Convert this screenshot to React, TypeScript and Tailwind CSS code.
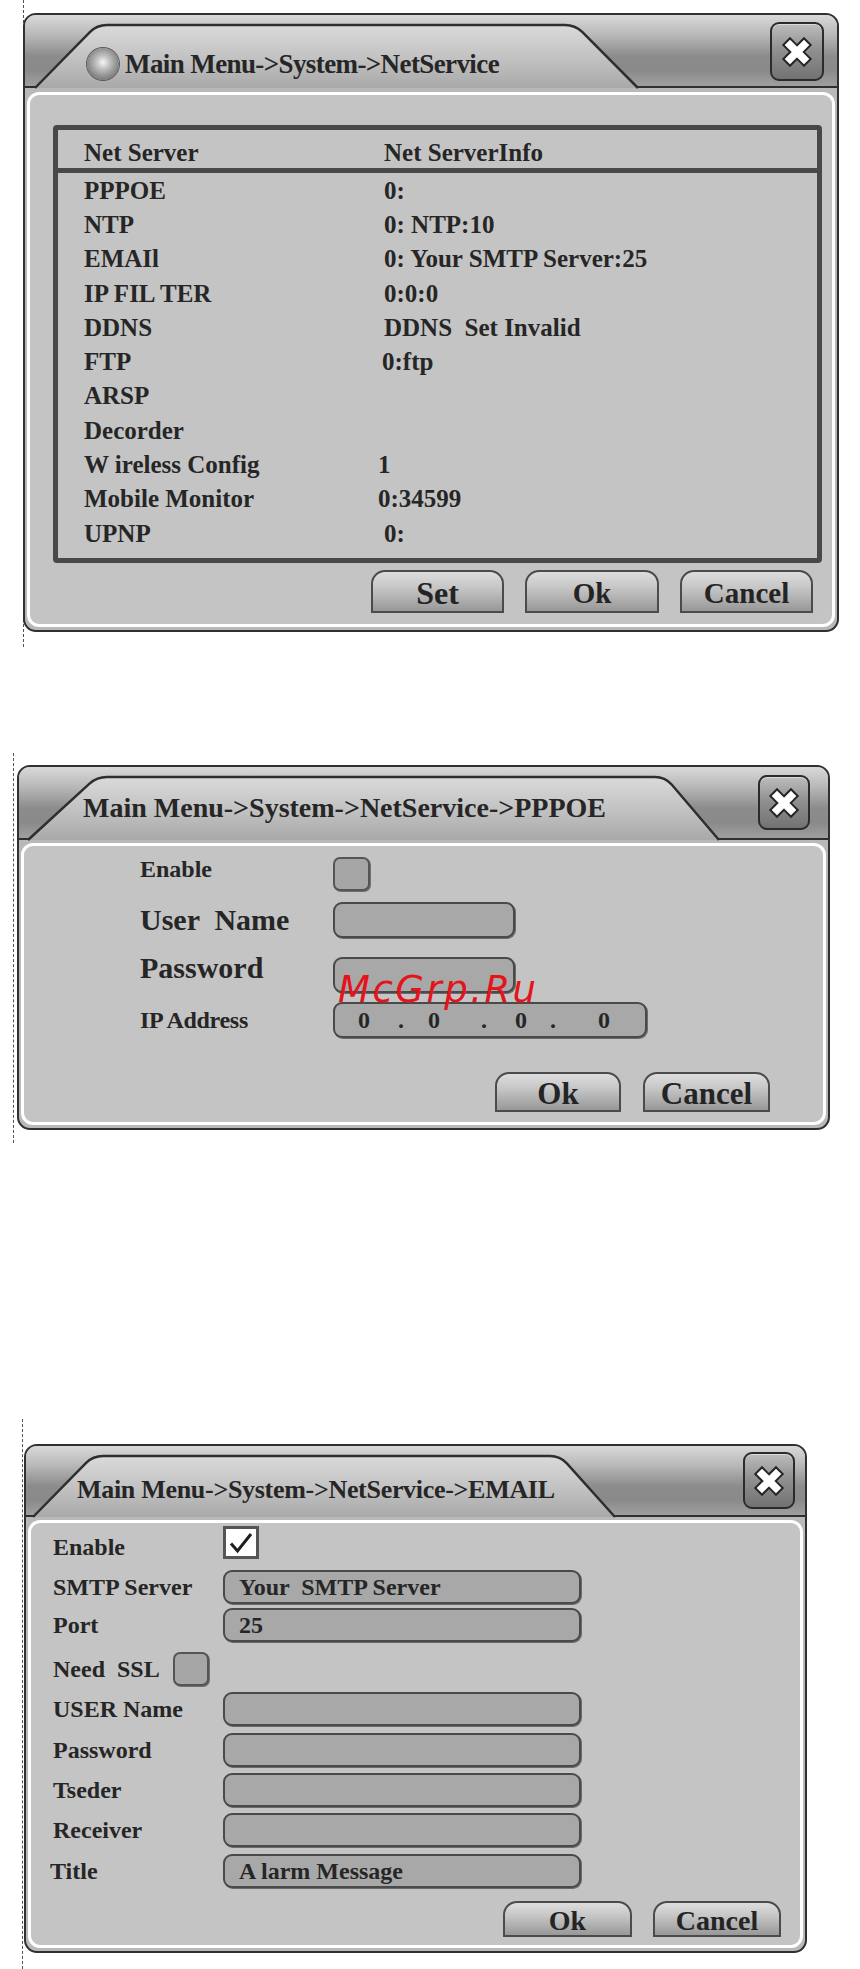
import React, { useId } from "react";

type TabGeom = { x1: number; x2: number; x3: number; x4: number; t: number; h: number };

function tabPath(g: TabGeom) {
  const r = 10;
  const d1x = g.x2 - g.x1;
  const d1y = g.t - g.h;
  const l1 = Math.hypot(d1x, d1y);
  const p1x = g.x2 - (d1x / l1) * r;
  const p1y = g.t - (d1y / l1) * r;
  const d2x = g.x4 - g.x3;
  const d2y = g.h - g.t;
  const l2 = Math.hypot(d2x, d2y);
  const p4x = g.x3 + (d2x / l2) * r;
  const p4y = g.t + (d2y / l2) * r;
  return `M${g.x1},${g.h + 2} L${p1x},${p1y} Q${g.x2},${g.t} ${g.x2 + r},${g.t} L${g.x3 - r},${g.t} Q${g.x3},${g.t} ${p4x},${p4y} L${g.x4},${g.h + 2}`;
}

function TitleBar({
  tab,
  className,
  children,
  closeClass,
}: {
  tab: TabGeom;
  className: string;
  children: React.ReactNode;
  closeClass: string;
}) {
  const id = "g" + useId().replace(/[^a-zA-Z0-9]/g, "");
  return (
    <div
      className={`relative flex items-start border-b-2 border-[#2f2f2f] bg-[linear-gradient(to_bottom,#d9d9d9_0%,#b8b8b8_28%,#8c8c8c_58%,#8a8a8a_78%,#9f9f9f_100%)] ${className}`}
    >
      <svg className="absolute left-0 top-0 h-full w-full overflow-visible">
        <defs>
          <linearGradient id={id} x1="0" y1="0" x2="0" y2="1">
            <stop offset="0" stopColor="#dadada" />
            <stop offset="0.5" stopColor="#c3c3c3" />
            <stop offset="1" stopColor="#a9a9a9" />
          </linearGradient>
        </defs>
        <path d={tabPath(tab)} fill={`url(#${id})`} stroke="#2e2e2e" strokeWidth="2.5" strokeLinejoin="round" />
      </svg>
      <div className="relative flex w-full items-start">
        {children}
        <CloseButton className={`ml-auto ${closeClass}`} />
      </div>
    </div>
  );
}

function CloseButton({ className }: { className: string }) {
  return (
    <div
      className={`flex shrink-0 items-center justify-center rounded-[9px] border-2 border-[#2b2b2b] bg-[linear-gradient(to_bottom,#bdbdbd_0%,#919191_45%,#727272_100%)] shadow-[inset_0_1px_0_rgba(255,255,255,0.45)] ${className}`}
    >
      <svg width="34" height="34" viewBox="0 0 34 34">
        <path d="M10 10 L24 24 M24 10 L10 24" stroke="#262626" strokeWidth="11.5" strokeLinecap="square" fill="none" />
        <path d="M10 10 L24 24 M24 10 L10 24" stroke="#ffffff" strokeWidth="7.5" strokeLinecap="square" fill="none" />
      </svg>
    </div>
  );
}

function Btn({ label, className }: { label: string; className: string }) {
  return (
    <div
      className={`flex items-center justify-center rounded-t-[14px] border-2 border-[#4b4b4b] bg-[linear-gradient(to_bottom,#dddddd_0%,#c6c6c6_40%,#989898_100%)] font-bold leading-none text-[#242424] ${className}`}
    >
      {label}
    </div>
  );
}

function Field({ className, children }: { className: string; children?: React.ReactNode }) {
  return (
    <div
      className={`flex items-center rounded-[9px] border-2 border-[#4a4a4a] bg-[#a8a8a8] shadow-[1px_1px_0_#6a6a6a] ${className}`}
    >
      {children}
    </div>
  );
}

const netRows: { name: string; value: string; off: string }[] = [
  { name: "PPPOE", value: "0:", off: "ml-0" },
  { name: "NTP", value: "0: NTP:10", off: "ml-0" },
  { name: "EMAIl", value: "0: Your SMTP Server:25", off: "ml-0" },
  { name: "IP FIL TER", value: "0:0:0", off: "ml-0" },
  { name: "DDNS", value: "DDNS  Set Invalid", off: "ml-0" },
  { name: "FTP", value: "0:ftp", off: "-ml-[2px]" },
  { name: "ARSP", value: "", off: "ml-0" },
  { name: "Decorder", value: "", off: "ml-0" },
  { name: "W ireless Config", value: "1", off: "-ml-[6px]" },
  { name: "Mobile Monitor", value: "0:34599", off: "-ml-[6px]" },
  { name: "UPNP", value: "0:", off: "ml-0" },
];

function Dialog1() {
  return (
    <div className="relative ml-[23px] mt-[13px] w-[816px] overflow-hidden rounded-[13px] border-2 border-[#303030] bg-[#b9b9b9]">
      <TitleBar
        className="h-[73px]"
        tab={{ x1: 10, x2: 72, x3: 550, x4: 613, t: 10, h: 71 }}
        closeClass="mt-[7px] mr-[13px] h-[59px] w-[54px]"
      >
        <div className="ml-[62px] mt-[33px] flex items-center gap-[6px]">
          <div className="h-[32px] w-[32px] rounded-full bg-[radial-gradient(circle_at_50%_45%,#f6f6f6_0%,#bdbdbd_30%,#7c7c7c_72%,#555555_100%)] shadow-[0_0_0_1px_#5a5a5a]" />
          <div className="text-[27px] font-bold leading-none tracking-[-0.6px] text-[#262626]">
            Main Menu-&gt;System-&gt;NetService
          </div>
        </div>
      </TitleBar>
      <div className="px-[2px] pb-[3px] pt-[4px]">
        <div className="rounded-[12px] border-[3px] border-white bg-[#c4c4c4]">
          <div className="ml-[23px] mr-[10px] mt-[30px] rounded-[4px] border-[5px] border-[#484848]">
            <div className="flex h-[43px] items-center border-b-[5px] border-[#484848] pl-[26px] pt-[6px] text-[25px] font-bold leading-none text-[#262626]">
              <div className="w-[300px]">Net Server</div>
              <div>Net ServerInfo</div>
            </div>
            <div className="pb-[8px]">
              {netRows.map((r) => (
                <div
                  key={r.name}
                  className="flex h-[34.3px] items-center pl-[26px] text-[25px] font-bold leading-none text-[#262626]"
                >
                  <div className="w-[300px] whitespace-pre">{r.name}</div>
                  <div className={`whitespace-pre ${r.off}`}>{r.value}</div>
                </div>
              ))}
            </div>
          </div>
          <div className="mb-[11px] mr-[19px] mt-[7px] flex justify-end gap-[21px]">
            <Btn label="Set" className="h-[43px] w-[133px] pt-[3px] text-[32px]" />
            <Btn label="Ok" className="h-[43px] w-[134px] pt-[3px] text-[29px]" />
            <Btn label="Cancel" className="h-[43px] w-[133px] pt-[3px] text-[29px]" />
          </div>
        </div>
      </div>
    </div>
  );
}

function Dialog2() {
  return (
    <div className="relative ml-[17px] mt-[133px] w-[813px] overflow-hidden rounded-[13px] border-2 border-[#303030] bg-[#b9b9b9]">
      <TitleBar
        className="h-[73px]"
        tab={{ x1: 9, x2: 78, x3: 646, x4: 700, t: 10, h: 71 }}
        closeClass="mt-[8px] mr-[18px] h-[55px] w-[52px]"
      >
        <div className="ml-[64px] mt-[27px] text-[28px] font-bold leading-none text-[#262626]">
          Main Menu-&gt;System-&gt;NetService-&gt;PPPOE
        </div>
      </TitleBar>
      <div className="px-[2px] pb-[3px] pt-[3px]">
        <div className="rounded-[12px] border-[3px] border-white bg-[#c4c4c4] pb-[10px] pl-[116px] pt-[11px]">
          <div className="flex h-[34px] items-center">
            <div className="mb-[10px] w-[193px] text-[24px] font-bold leading-none">Enable</div>
            <div className="h-[34px] w-[37px] rounded-[7px] border-2 border-[#555555] bg-[#a6a6a6] shadow-[1px_1px_0_#707070]" />
          </div>
          <div className="mt-[11px] flex h-[36px] items-center">
            <div className="w-[193px] whitespace-pre text-[30px] font-bold leading-none">User  Name</div>
            <Field className="h-[36px] w-[182px]" />
          </div>
          <div className="mt-[19px] flex h-[36px] items-center">
            <div className="mb-[14px] w-[193px] text-[30px] font-bold leading-none">Password</div>
            <Field className="h-[36px] w-[182px]" />
          </div>
          <div className="mt-[9px] flex h-[36px] items-center">
            <div className="w-[193px] text-[24px] font-bold leading-none tracking-[-0.3px]">IP Address</div>
            <Field className="h-[36px] w-[314px] text-[24px] font-bold leading-none">
              <span className="ml-[19px] w-[20px] text-center">0</span>
              <span className="ml-[17px] w-[20px] text-center">.</span>
              <span className="ml-[13px] w-[20px] text-center">0</span>
              <span className="ml-[30px] w-[20px] text-center">.</span>
              <span className="ml-[17px] w-[20px] text-center">0</span>
              <span className="ml-[12px] w-[20px] text-center">.</span>
              <span className="ml-[31px] w-[20px] text-center">0</span>
            </Field>
          </div>
          <div className="mr-[53px] mt-[34px] flex justify-end gap-[22px]">
            <Btn label="Ok" className="h-[40px] w-[126px] pt-[3px] text-[31px]" />
            <Btn label="Cancel" className="h-[40px] w-[127px] pt-[3px] text-[31px]" />
          </div>
        </div>
      </div>
      <div className="absolute left-[319px] top-[204px] font-['DejaVu_Sans',sans-serif] text-[37px] italic leading-none tracking-[2.5px] text-[#e3141b]">
        McGrp.Ru
      </div>
    </div>
  );
}

function EmailRow({ label, mt, children, labelClass }: { label: string; mt: string; children: React.ReactNode; labelClass?: string }) {
  return (
    <div className={`flex h-[34px] items-center ${mt}`}>
      <div className={`w-[170px] whitespace-pre text-[24px] font-bold leading-none ${labelClass ?? ""}`}>{label}</div>
      {children}
    </div>
  );
}

function Dialog3() {
  return (
    <div className="relative ml-[24px] mt-[314px] w-[783px] overflow-hidden rounded-[13px] border-2 border-[#303030] bg-[#b9b9b9]">
      <TitleBar
        className="h-[71px]"
        tab={{ x1: 7, x2: 67, x3: 534, x4: 589, t: 10, h: 69 }}
        closeClass="mt-[6px] mr-[10px] h-[57px] w-[52px]"
      >
        <div className="ml-[51px] mt-[31px] text-[26px] font-bold leading-none tracking-[-0.3px] text-[#262626]">
          Main Menu-&gt;System-&gt;NetService-&gt;EMAIL
        </div>
      </TitleBar>
      <div className="px-[2px] pb-[3px] pt-[3px]">
        <div className="rounded-[12px] border-[3px] border-white bg-[#c4c4c4] pb-[8px] pl-[22px] pt-[3px]">
          <div className="flex h-[33px] items-center">
            <div className="mt-[9px] w-[170px] text-[24px] font-bold leading-none">Enable</div>
            <div className="flex h-[33px] w-[36px] items-center justify-center border-[3px] border-[#555555] bg-white">
              <svg width="26" height="24" viewBox="0 0 26 24">
                <path d="M3 12.5 L9.5 20 L23 3" stroke="#1e1e1e" strokeWidth="3" fill="none" strokeLinejoin="miter" />
              </svg>
            </div>
          </div>
          <EmailRow label="SMTP Server" mt="mt-[11px]">
            <Field className="h-[34px] w-[358px] whitespace-pre pl-[14px] text-[24px] font-bold leading-none">Your  SMTP Server</Field>
          </EmailRow>
          <EmailRow label="Port" mt="mt-[4px]">
            <Field className="h-[34px] w-[358px] pl-[14px] text-[24px] font-bold leading-none">25</Field>
          </EmailRow>
          <div className="mt-[10px] flex h-[34px] items-center">
            <div className="w-[120px] whitespace-pre text-[24px] font-bold leading-none">Need  SSL</div>
            <div className="h-[34px] w-[36px] rounded-[7px] border-2 border-[#555555] bg-[#a6a6a6] shadow-[1px_1px_0_#707070]" />
          </div>
          <EmailRow label="USER Name" mt="mt-[6px]">
            <Field className="h-[34px] w-[358px]" />
          </EmailRow>
          <EmailRow label="Password" mt="mt-[7px]">
            <Field className="h-[34px] w-[358px]" />
          </EmailRow>
          <EmailRow label="Tseder" mt="mt-[6px]">
            <Field className="h-[34px] w-[358px]" />
          </EmailRow>
          <EmailRow label="Receiver" mt="mt-[6px]">
            <Field className="h-[34px] w-[358px]" />
          </EmailRow>
          <EmailRow label="Title" mt="mt-[7px]" labelClass="-ml-[3px] mr-[3px]">
            <Field className="h-[34px] w-[358px] pl-[14px] text-[24px] font-bold leading-none">A larm Message</Field>
          </EmailRow>
          <div className="mr-[19px] mt-[13px] flex justify-end gap-[21px]">
            <Btn label="Ok" className="h-[36px] w-[129px] pt-[3px] text-[28px]" />
            <Btn label="Cancel" className="h-[36px] w-[128px] pt-[3px] text-[28px]" />
          </div>
        </div>
      </div>
    </div>
  );
}

export default function App() {
  return (
    <div className="relative flex h-[1969px] w-[860px] flex-col items-start overflow-hidden bg-white font-['Liberation_Serif','Times_New_Roman',serif] text-[#262626]">
      <div className="absolute left-[23px] top-0 h-[647px] border-l border-dashed border-[#555555]" />
      <div className="absolute left-[13px] top-[753px] h-[390px] border-l border-dashed border-[#555555]" />
      <div className="absolute left-[22px] top-[1419px] h-[550px] border-l border-dashed border-[#555555]" />
      <Dialog1 />
      <Dialog2 />
      <Dialog3 />
    </div>
  );
}
